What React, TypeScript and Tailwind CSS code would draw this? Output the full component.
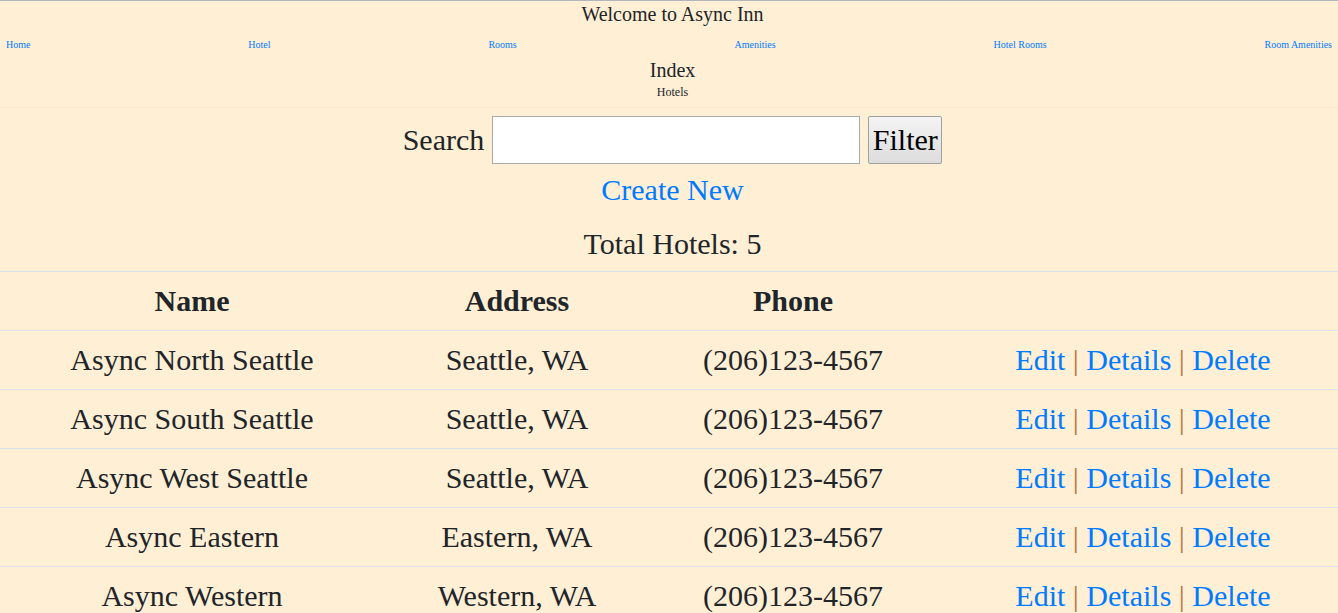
import React from "react";

const hotels = [
  { name: "Async North Seattle", address: "Seattle, WA", phone: "(206)123-4567" },
  { name: "Async South Seattle", address: "Seattle, WA", phone: "(206)123-4567" },
  { name: "Async West Seattle", address: "Seattle, WA", phone: "(206)123-4567" },
  { name: "Async Eastern", address: "Eastern, WA", phone: "(206)123-4567" },
  { name: "Async Western", address: "Western, WA", phone: "(206)123-4567" },
];

const navLinks = ["Home", "Hotel", "Rooms", "Amenities", "Hotel Rooms", "Room Amenities"];

export default function App() {
  return (
    <div
      className="min-h-screen w-full bg-[#ffefd5] text-[#212529] border-t border-[#b4b4bc]"
      style={{ fontFamily: '"Liberation Serif", "Times New Roman", serif' }}
    >
      <header className="flex flex-col items-center">
        <div className="pl-[7px] text-[20px] leading-[26px] text-center">Welcome to Async Inn</div>
        <nav className="w-full h-[31px] pt-[4px] flex items-center justify-between px-[6px] text-[10px] leading-[12px]">
          {navLinks.map((l) => (
            <a key={l} className="text-[#007bff]" href="#">
              {l}
            </a>
          ))}
        </nav>
        <div className="pl-[7px] text-[20px] leading-[24px]">Index</div>
        <div className="pl-[7px] text-[12px] leading-[20px]">Hotels</div>
      </header>
      <div className="mt-[5px] border-t border-[#f7e6cc]" />
      <main className="flex flex-col items-center pl-[7px] text-[30px] leading-[34px]">
        <form className="mt-[8px] flex items-center justify-center gap-[8px]">
          <label>Search</label>
          <input
            className="w-[368px] h-[48px] bg-white border border-[#a9a9a9] px-1 outline-none"
            type="text"
          />
          <button
            type="button"
            className="h-[48px] w-[74px] border border-[#a0a0a0] bg-gradient-to-b from-[#f4f4f4] to-[#dcdcdc] text-black rounded-[2px]"
          >
            Filter
          </button>
        </form>
        <a href="#" className="mt-[9px] text-[#007bff]">
          Create New
        </a>
        <div className="mt-[20px]">Total Hotels: 5</div>
      </main>
      <table className="mt-[10px] w-full table-fixed border-collapse text-[30px] leading-[34px]">
        <thead>
          <tr>
            <th className="w-[384px] border-t border-[#dee2e6] py-3 px-3 font-bold">Name</th>
            <th className="w-[266px] border-t border-[#dee2e6] py-3 px-3 font-bold">Address</th>
            <th className="w-[286px] border-t border-[#dee2e6] py-3 px-3 font-bold">Phone</th>
            <th className="border-t border-[#dee2e6] py-3 px-3"></th>
          </tr>
        </thead>
        <tbody>
          {hotels.map((h, i) => (
            <tr key={i}>
              <td className="border-t border-[#dee2e6] py-3 px-3 text-center whitespace-nowrap">{h.name}</td>
              <td className="border-t border-[#dee2e6] py-3 px-3 text-center whitespace-nowrap">{h.address}</td>
              <td className="border-t border-[#dee2e6] py-3 px-3 text-center whitespace-nowrap">{h.phone}</td>
              <td className="border-t border-[#dee2e6] py-3 pl-[12px] pr-0 text-center whitespace-nowrap">
                <a href="#" className="text-[#007bff]">Edit</a>
                <span className="text-[#b47a3c]"> | </span>
                <a href="#" className="text-[#007bff]">Details</a>
                <span className="text-[#b47a3c]"> | </span>
                <a href="#" className="text-[#007bff]">Delete</a>
              </td>
            </tr>
          ))}
        </tbody>
      </table>
    </div>
  );
}
